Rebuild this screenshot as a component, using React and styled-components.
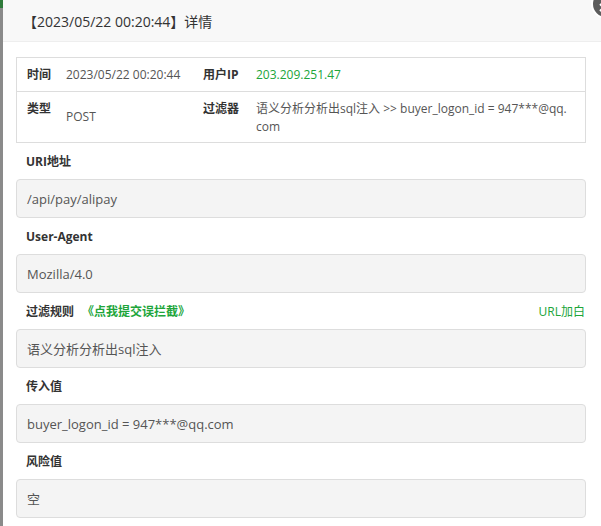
import React from "react";
import styled, { createGlobalStyle } from "styled-components";

const Global = createGlobalStyle`
  html, body { margin: 0; padding: 0; }
  body {
    background: #7d7d7d;
    font-family: "Open Sans", "Noto Sans CJK SC", sans-serif;
    overflow: hidden;
  }
`;

const Page = styled.div`
  display: flex;
  height: 526px;
`;

const Edge = styled.div`
  width: 3px;
  flex: none;
  background: linear-gradient(#2f7a3a 0 8px, #8a8a8a 8px);
`;

const Dialog = styled.div`
  position: relative;
  flex: 1;
  background: #fff;
  height: 526px;
  overflow: hidden;
`;

const Header = styled.div`
  height: 41px;
  background: #f8f8f8;
  border-bottom: 1px solid #eee;
  display: flex;
  align-items: center;
  padding-left: 20px;
  font-size: 14px;
  color: #333;
`;

const Close = styled.div`
  position: absolute;
  top: -11px;
  right: -20px;
  width: 30px;
  height: 30px;
  border-radius: 50%;
  background: #5c5c5c;
  border: 2px solid #fff;
  box-sizing: border-box;
  display: flex;
  align-items: flex-end;
  justify-content: flex-start;
  padding: 0 0 5px 6px;
`;

const Body = styled.div`
  padding: 15px 15px 0 13px;
`;

const InfoTable = styled.div`
  display: grid;
  grid-template-columns: 49px 137px 53px 1fr;
  border: 1px solid #ddd;
  font-size: 12px;
  color: #555;
`;

const Cell = styled.div`
  padding: ${(p) => (p.$first ? "0 0 0 10px" : "0")};
  min-height: ${(p) => (p.$tall ? "50px" : "33px")};
  display: flex;
  align-items: ${(p) => (p.$top ? "flex-start" : "center")};
  padding-top: ${(p) => (p.$top ? "8px" : "0")};
  border-top: ${(p) => (p.$line ? "1px solid #ddd" : "none")};
  color: ${(p) => (p.$label ? "#333" : p.$green ? "#20a53a" : "#555")};
  font-weight: ${(p) => (p.$label ? 700 : 400)};
  line-height: 18px;
  box-sizing: border-box;
`;

const Wrap = styled.div`
  word-break: break-all;
  padding-right: 16px;
  padding-bottom: 6px;
`;

const Section = styled.div`
  margin-top: 9px;
`;

const LabelRow = styled.div`
  display: flex;
  align-items: center;
  justify-content: space-between;
  height: 18px;
  padding: 0 1px 0 10px;
  font-size: 12px;
  margin-bottom: 9px;
`;

const Label = styled.span`
  font-weight: 700;
  color: #333;
`;

const Link = styled.span`
  color: #20a53a;
  font-weight: ${(p) => (p.$bold ? 700 : 400)};
  margin-left: ${(p) => (p.$bold ? "8px" : "0")};
`;

const Box = styled.div`
  height: 39px;
  box-sizing: border-box;
  background: #f4f4f4;
  border: 1px solid #ddd;
  border-radius: 4px;
  display: flex;
  align-items: center;
  padding-left: 10px;
  font-size: 13px;
  color: #555;
`;

const fields = [
  { label: "URI地址", value: "/api/pay/alipay" },
  { label: "User-Agent", value: "Mozilla/4.0" },
  { label: "过滤规则", value: "语义分析分析出sql注入", rule: true },
  { label: "传入值", value: "buyer_logon_id = 947***@qq.com" },
  { label: "风险值", value: "空" },
];

export default function App() {
  return (
    <>
      <Global />
      <Page>
        <Edge />
        <Dialog>
          <Header>【2023/05/22 00:20:44】详情</Header>
          <Close>
            <svg width="9" height="9" viewBox="0 0 9 9">
              <path d="M1 1L8 8M8 1L1 8" stroke="#fff" strokeWidth="2" />
            </svg>
          </Close>
          <Body>
            <InfoTable>
              <Cell $first $label>时间</Cell>
              <Cell>2023/05/22 00:20:44</Cell>
              <Cell $label>用户IP</Cell>
              <Cell $green>203.209.251.47</Cell>
              <Cell $first $label $line $top $tall>类型</Cell>
              <Cell $line>POST</Cell>
              <Cell $label $line $top>过滤器</Cell>
              <Cell $line $top>
                <Wrap>语义分析分析出sql注入 &gt;&gt; buyer_logon_id = 947***@qq.com</Wrap>
              </Cell>
            </InfoTable>
            {fields.map((f, i) => (
              <Section key={i}>
                <LabelRow>
                  <span>
                    <Label>{f.label}</Label>
                    {f.rule && <Link $bold>《点我提交误拦截》</Link>}
                  </span>
                  {f.rule && <Link>URL加白</Link>}
                </LabelRow>
                <Box>{f.value}</Box>
              </Section>
            ))}
          </Body>
        </Dialog>
      </Page>
    </>
  );
}
